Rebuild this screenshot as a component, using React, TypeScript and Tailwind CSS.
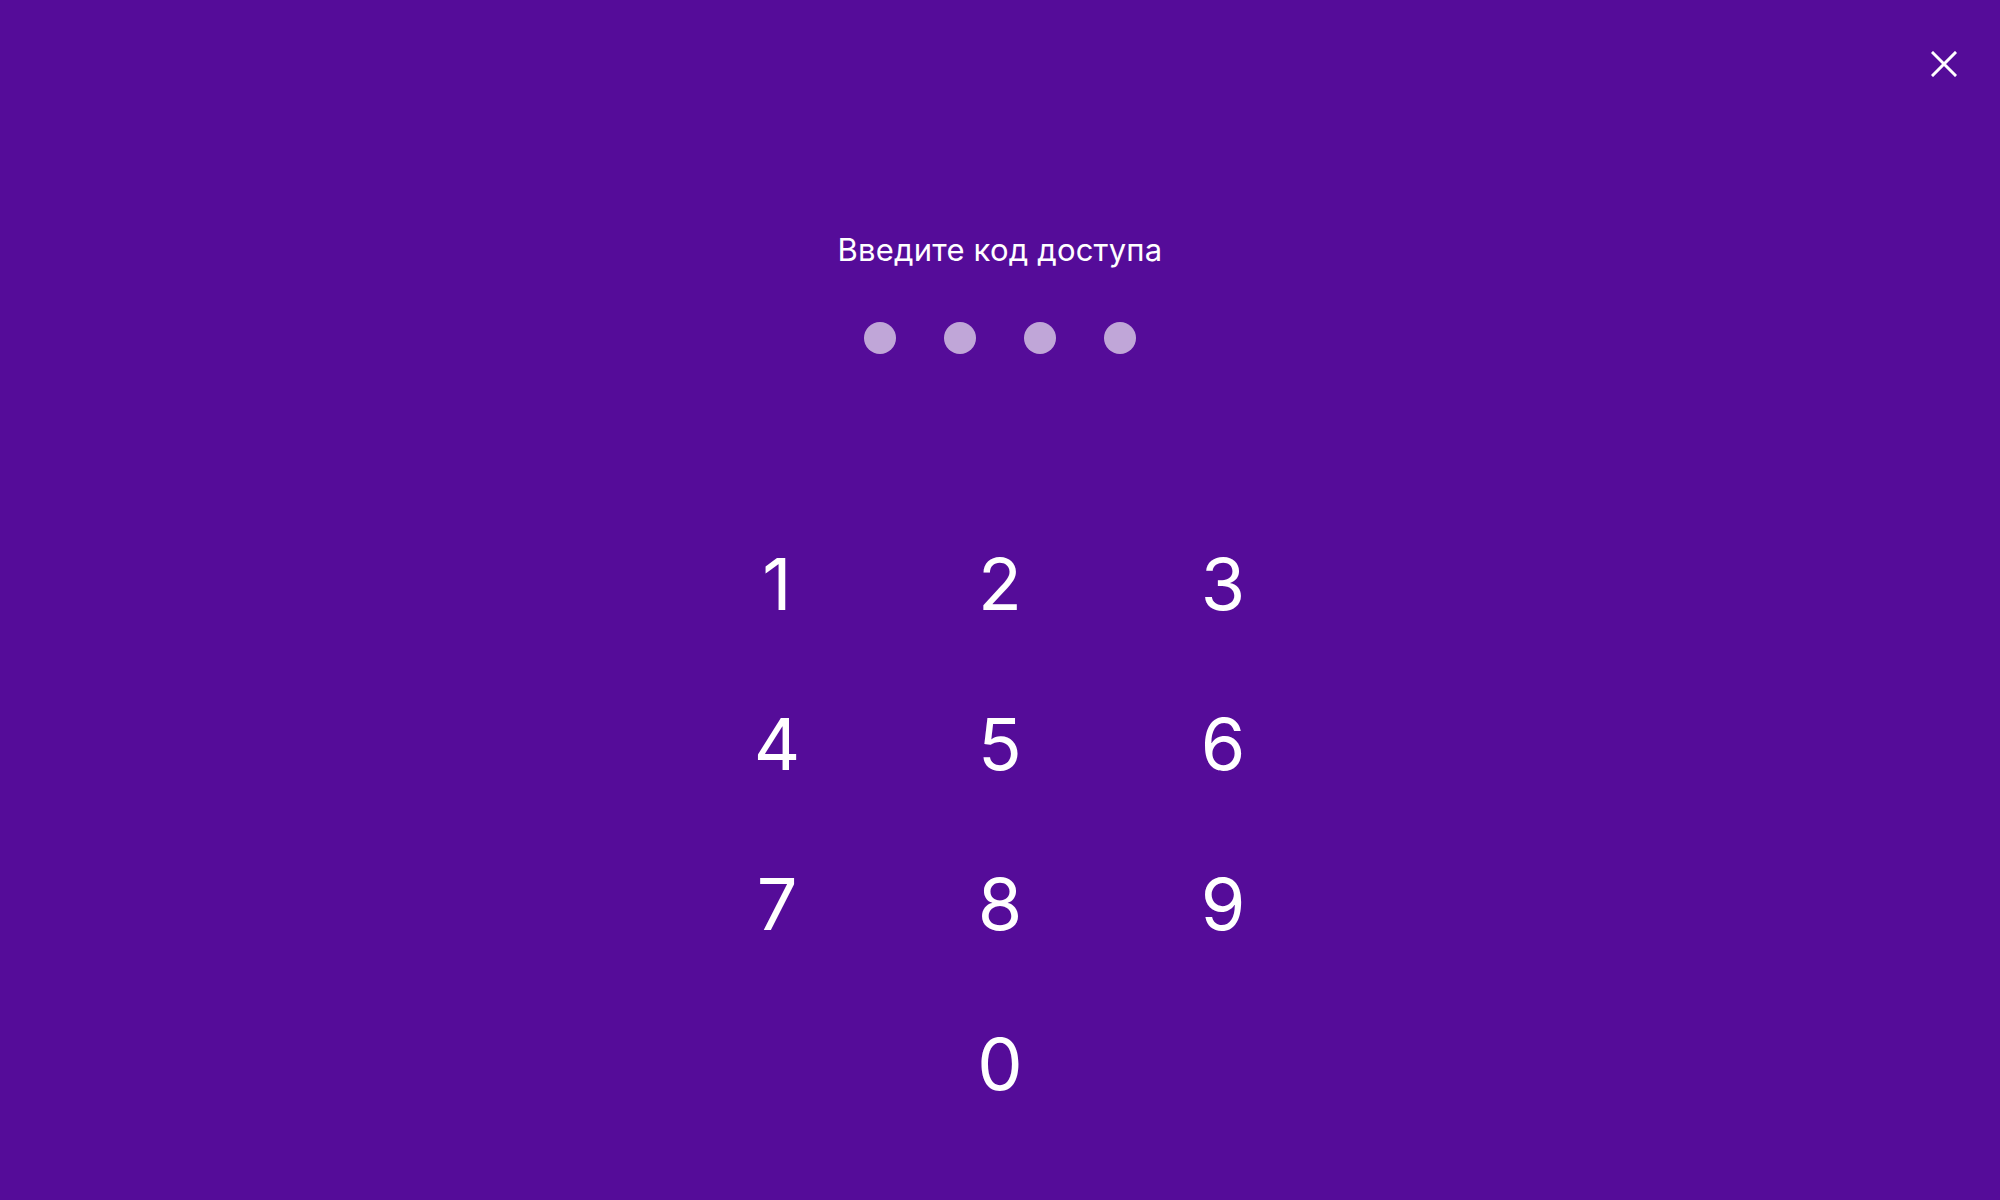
import React from "react";

const keys = ["1", "2", "3", "4", "5", "6", "7", "8", "9", "", "0", ""];

export default function App() {
    const [code, setCode] = React.useState<string>("");

    const press = (k: string) => {
        if (!k) return;
        setCode((prev) => (prev.length >= 4 ? prev : prev + k));
    };

    return (
        <div className="relative flex h-[1200px] w-full flex-col items-center bg-[#550c99] pt-[230px] text-white [font-family:Inter,'Noto_Sans',sans-serif]">
            {/* закрыть */}
            <button className="absolute right-[43px] top-[51px] flex h-[26px] w-[26px] items-center justify-center" onClick={() => setCode("")}>
                <svg viewBox="0 0 26 26" className="h-[26px] w-[26px]" fill="none" stroke="white" strokeWidth="3" strokeLinecap="square">
                    <path d="M2 2L24 24M24 2L2 24" />
                </svg>
            </button>

            <h1 className="text-[31px] leading-[40px] font-normal tracking-[0.2px]">Введите код доступа</h1>

            <div className="mt-[52px] flex gap-[48px]">
                {[0, 1, 2, 3].map((i) => (
                    <span
                        key={i}
                        className={`h-[32px] w-[32px] rounded-full ${i < code.length ? "bg-white" : "bg-[#c0a6d8]"}`}
                    />
                ))}
            </div>

            <div className="mt-[150px] grid grid-cols-[repeat(3,223px)] grid-rows-[repeat(4,160px)]">
                {keys.map((k, i) => (
                    <button
                        key={i}
                        onClick={() => press(k)}
                        className="flex items-center justify-center text-[72px] leading-none font-normal"
                    >
                        {k}
                    </button>
                ))}
            </div>
        </div>
    );
}
